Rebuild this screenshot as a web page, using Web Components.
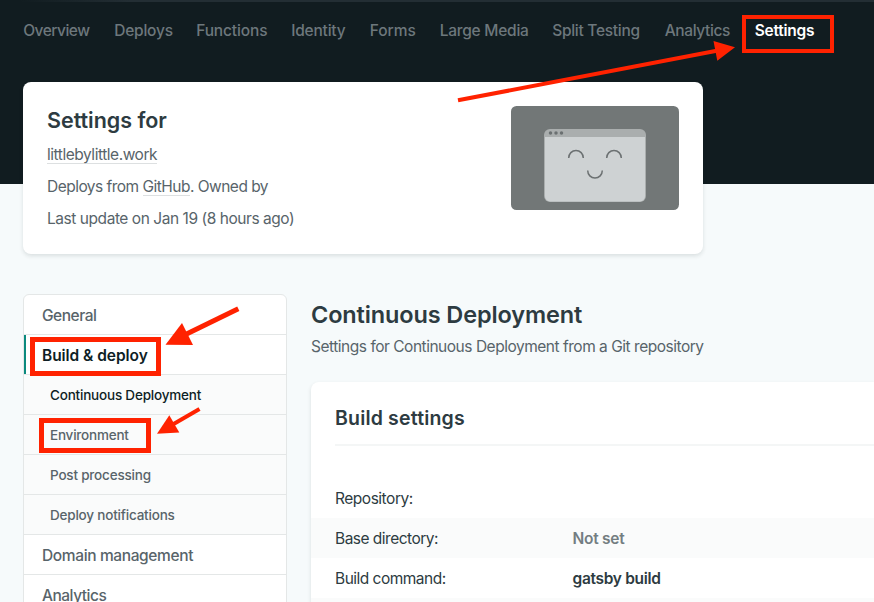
<!DOCTYPE html>
<html lang="en">
<head>
<meta charset="utf-8">
<title>Site settings</title>
<style>
  html, body { margin: 0; height: 100%; }
  body { overflow: hidden; background: #f6fafb; font-family: Inter, "Liberation Sans", sans-serif; font-size: 15.5px; color: #2d3b41; }
</style>
</head>
<body>
<settings-page>
  <top-nav slot="header">
    <nav-item style="width:67px;letter-spacing:-.5px">Overview</nav-item>
    <nav-item style="width:58px;letter-spacing:-.22px">Deploys</nav-item>
    <nav-item style="width:71px;letter-spacing:-.14px">Functions</nav-item>
    <nav-item style="width:54.5px;letter-spacing:-.21px">Identity</nav-item>
    <nav-item style="width:46px;letter-spacing:-.05px">Forms</nav-item>
    <nav-item style="width:88.5px;letter-spacing:-.25px">Large Media</nav-item>
    <nav-item style="width:88.5px;letter-spacing:-.28px">Split Testing</nav-item>
    <nav-item style="width:66px;letter-spacing:-.39px">Analytics</nav-item>
    <nav-item active style="letter-spacing:-.23px">Settings</nav-item>
  </top-nav>
  <site-card slot="site">
    <span slot="title">Settings for</span>
    <info-line style="letter-spacing:-.46px"><text-link>littlebylittle.work</text-link></info-line>
    <info-line style="letter-spacing:-.52px">Deploys from <text-link>GitHub</text-link>. Owned by</info-line>
    <info-line style="letter-spacing:-.45px">Last update on Jan 19 (8 hours ago)</info-line>
    <site-preview slot="preview"></site-preview>
  </site-card>
  <side-menu slot="menu">
    <menu-row style="letter-spacing:-.47px">General</menu-row>
    <menu-row active style="letter-spacing:-.05px">Build &amp; deploy</menu-row>
    <menu-row sub current style="letter-spacing:-.2px">Continuous Deployment</menu-row>
    <menu-row sub style="letter-spacing:-.22px">Environment</menu-row>
    <menu-row sub style="letter-spacing:-.2px">Post processing</menu-row>
    <menu-row sub style="letter-spacing:-.2px">Deploy notifications</menu-row>
    <menu-row style="letter-spacing:-.37px">Domain management</menu-row>
    <menu-row style="letter-spacing:-.5px">Analytics</menu-row>
  </side-menu>
  <settings-section slot="content">
    <span slot="title">Continuous Deployment</span>
    <span slot="intro">Settings for Continuous Deployment from a Git repository</span>
    <settings-panel>
      <span slot="title">Build settings</span>
      <setting-row><span slot="label" style="letter-spacing:-.48px">Repository:</span></setting-row>
      <setting-row shaded unset><span slot="label" style="letter-spacing:-.51px">Base directory:</span><span style="letter-spacing:-.26px">Not set</span></setting-row>
      <setting-row><span slot="label" style="letter-spacing:-.51px">Build command:</span><span style="letter-spacing:-.31px">gatsby build</span></setting-row>
      <setting-row shaded></setting-row>
    </settings-panel>
  </settings-section>
  <mark-layer slot="marks"></mark-layer>
</settings-page>

<script>
  const define = (name, html) => customElements.define(name, class extends HTMLElement {
    constructor() {
      super();
      this.attachShadow({ mode: "open" }).innerHTML = html;
    }
  });

  define("settings-page", `<style>
    :host { display: block; position: relative; width: 100%; height: 602px; overflow: hidden; }
    .site { margin: -102px 0 0 23px; }
    .columns { display: grid; grid-template-columns: 264px 1fr; column-gap: 24px; margin: 40px 0 0 23px; align-items: start; }
  </style>
  <slot name="header"></slot>
  <div class="site"><slot name="site"></slot></div>
  <div class="columns"><slot name="menu"></slot><slot name="content"></slot></div>
  <slot name="marks"></slot>`);

  define("top-nav", `<style>
    :host { display: block; height: 184px; background: linear-gradient(90deg, #111c20 20px, #232e34 130px) top / 100% 2px no-repeat #111c20; }
    nav { display: flex; gap: 24px; padding: 19px 0 0 23.2px; }
  </style><nav><slot></slot></nav>`);

  define("nav-item", `<style>
    :host { display: block; flex: none; line-height: 24px; font-weight: 500; white-space: nowrap; color: #6d777c; }
    :host([active]) { color: #fff; font-weight: 600; }
  </style><slot></slot>`);

  define("site-card", `<style>
    :host { display: flex; justify-content: space-between; align-items: flex-start; box-sizing: border-box; position: relative;
      width: 680px; height: 172px; padding: 24px; border-radius: 8px; background: #fff; box-shadow: 0 2px 4px rgba(14,30,37,.12); }
    h1 { margin: 0 0 4px; font-size: 21.5px; line-height: 28px; font-weight: 600; letter-spacing: -.02px; }
  </style>
  <div><h1><slot name="title"></slot></h1><slot></slot></div><slot name="preview"></slot>`);

  define("info-line", `<style>
    :host { display: block; height: 32px; line-height: 34px; white-space: nowrap; color: #58646a; }
  </style><slot></slot>`);

  define("text-link", `<style>
    :host { display: inline-block; height: 19px; line-height: 20px; box-shadow: inset 0 -1px #dde0e1; }
  </style><slot></slot>`);

  define("site-preview", `<style>
    :host, svg { display: block; width: 168px; height: 104px; }
  </style>
  <svg viewBox="0 0 168 104">
    <rect width="168" height="104" rx="5.5" fill="#727777"/>
    <rect x="33" y="23" width="102" height="73" rx="6" fill="#aaaeae"/>
    <path d="M34 31h100v59a5 5 0 0 1-5 5.500H39a5 5 0 0 1-5-5.500z" fill="#ced2d3"/>
    <g fill="#6b7071"><circle cx="39.500" cy="27" r="1.750"/><circle cx="45" cy="27" r="1.750"/><circle cx="50.500" cy="27" r="1.750"/></g>
    <g fill="none" stroke="#6c7172" stroke-width="1.500">
      <path d="M57.700 52a7.300 7.600 0 0 1 14.600 0M95.700 52a7.300 7.600 0 0 1 14.600 0M76.700 64.500a7.300 7.600 0 0 0 14.600 0"/>
    </g>
  </svg>`);

  define("side-menu", `<style>
    :host { display: block; border: 1px solid #e4e7e7; border-radius: 6px 6px 0 0; background: #fff; overflow: hidden; }
  </style><slot></slot>`);

  define("menu-row", `<style>
    :host { display: block; box-sizing: border-box; height: 40px; padding-left: 18px; border-bottom: 1px solid #e4e7e7;
      line-height: 42px; font-weight: 500; color: #58646a; white-space: nowrap; }
    :host([active]) { font-weight: 600; color: #0e1e25; box-shadow: inset 2px 0 #0b8a7e; }
    :host([sub]) { padding-left: 26px; font-size: 13.5px; line-height: 40px; background: #fafbfb; }
    :host([current]) { color: #0e1e25; }
  </style><slot></slot>`);

  define("settings-section", `<style>
    :host { display: block; min-width: 0; }
    h2 { margin: 4px 0 0; font-size: 23.5px; line-height: 34px; font-weight: 600; letter-spacing: -.128px; }
    p { margin: 3px 0 23px; line-height: 24px; letter-spacing: -.48px; color: #58646a; }
  </style>
  <h2><slot name="title"></slot></h2><p><slot name="intro"></slot></p><slot></slot>`);

  define("settings-panel", `<style>
    :host { display: block; height: 240px; border-radius: 8px 0 0 0; background: #fff; box-shadow: 0 2px 4px rgba(14,30,37,.12); }
    h3 { margin: 0 0 32px 24px; padding: 22px 0 12px; line-height: 28px; font-size: 19.5px; font-weight: 600; letter-spacing: .17px; border-bottom: 2px solid #f4f6f6; }
  </style><h3><slot name="title"></slot></h3><slot></slot>`);

  define("setting-row", `<style>
    :host { display: grid; grid-template-columns: 237.500px 1fr; height: 40px; padding-left: 24px; line-height: 42px; }
    :host([shaded]) { background: #fafbfb; }
    .value { font-weight: 600; }
    :host([unset]) .value { color: #737d81; }
  </style><div><slot name="label"></slot></div><div class="value"><slot></slot></div>`);

  define("mark-layer", `<style>
    :host { position: absolute; inset: 0; pointer-events: none; }
    svg { display: block; }
  </style>
  <svg width="874" height="602" viewBox="0 0 874 602">
    <g fill="none" stroke="#ff2200">
      <rect x="744" y="17" width="88" height="34" stroke-width="4"/>
      <rect x="32.500" y="339.500" width="126" height="34" stroke-width="5"/>
      <rect x="41.500" y="420.500" width="107" height="30" stroke-width="5"/>
      <path d="M458 100.300L718 50.500" stroke-width="4"/>
      <path d="M238.300 308.700L184 335.300" stroke-width="5"/>
      <path d="M199.500 409L171 425.500" stroke-width="4"/>
    </g>
    <g fill="#ff2200">
      <path d="M713.500 41L735 47.300L717.300 60.700z"/>
      <path d="M165.500 344.700L182 323L193 345z"/>
      <path d="M157 433.800L169.300 415.300L179.300 432.500z"/>
    </g>
  </svg>`);
</script>
</body>
</html>
